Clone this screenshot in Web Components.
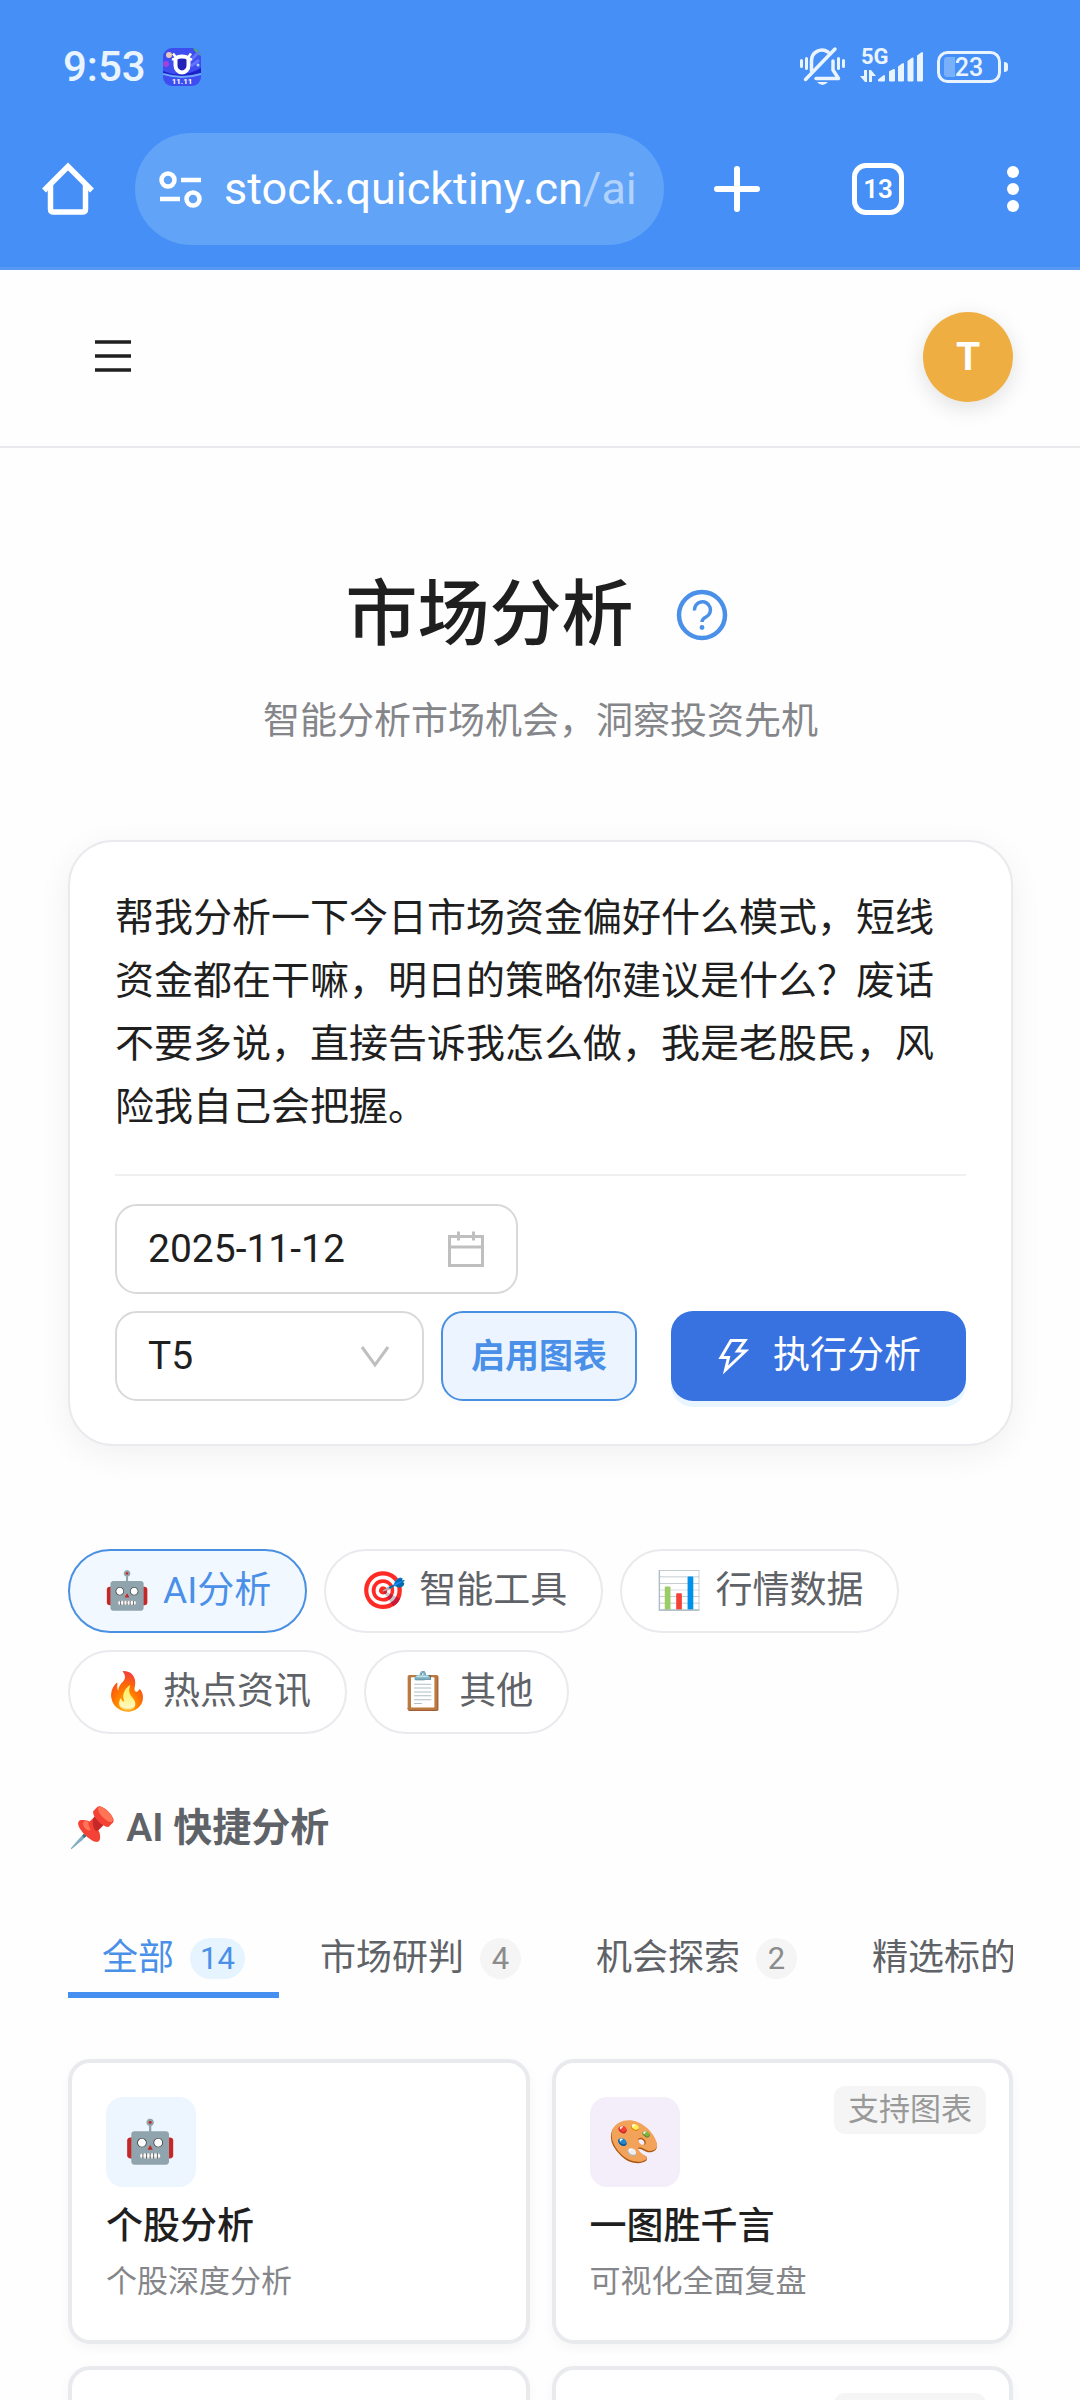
<!DOCTYPE html>
<html lang="zh-CN">
<head>
    <meta charset="UTF-8">
    <meta name="viewport" content="width=device-width, initial-scale=1.0">
    <title>市场分析</title>
    <style>
        body {
            margin: 0;
            background: #fefefe;
            color: #1f1f1f;
            font-family: Roboto, "Noto Sans CJK SC", "Noto Color Emoji", sans-serif;
            font-size: 37px;
            line-height: 58px;
        }
    </style>
</head>
<body>
    <market-page></market-page>

    <script>
        const resetStyles = `
            * { box-sizing: border-box; }
            button, input, select, textarea {
                margin: 0;
                padding: 0;
                border: 0;
                background: none;
                color: inherit;
                font: inherit;
                outline: none;
            }
            h1, h2, h3, p { margin: 0; }
            svg { display: block; flex: none; overflow: visible; }
        `;

        function render(el, css, html) {
            const root = el.attachShadow({ mode: 'open' });
            root.innerHTML = `<style>${resetStyles}${css}</style>${html}`;
        }

        class StatusBar extends HTMLElement {
            constructor() {
                super();
                render(this, `
                    :host {
                        display: flex;
                        align-items: center;
                        justify-content: space-between;
                        height: 133px;
                        padding: 0 71px 0 63px;
                        background: #458ff7;
                        color: #eaf4ff;
                    }
                    .side { display: flex; align-items: center; gap: 14px; }
                    .left { gap: 17px; }
                    .time { font-size: 42px; font-weight: 500; }
                    text { font-family: Roboto, sans-serif; font-weight: 700; }
                `, `
                    <div class="side left">
                        <span class="time">9:53</span>
                        <svg width="38" height="38" viewBox="0 0 38 38">
                            <defs><clipPath id="app"><rect width="38" height="38" rx="9"/></clipPath></defs>
                            <g clip-path="url(#app)">
                                <rect width="38" height="38" fill="#3d4df0"/>
                                <path d="M0 23Q19 31 38 20V25Q19 33 0 27z" fill="#1d22c6"/>
                                <path d="M0 26Q19 32 38 26" fill="none" stroke="#6fa8ff" stroke-width="2"/>
                                <path d="M30 0h8v8q-5-2-8-8z" fill="#4caf6e"/>
                                <path d="M26 14l10-10M28 18l8-6" stroke="#6173ff" stroke-width="3"/>
                                <circle cx="6" cy="7" r="3" fill="#e8c9b4"/>
                                <circle cx="3" cy="16" r="3" fill="#a341dc"/>
                                <circle cx="35" cy="17" r="1.5" fill="#a9d7ff"/>
                                <path d="M12.500 10.500V17.500a6.500 7 0 0 0 13 0V10.500q-2-2-6.500-2t-6.500 2z" fill="#2222b8" stroke="#fff" stroke-width="4" stroke-linejoin="round"/>
                                <path d="M9 11q3 1 4-1M29 11q-3 1-4-1M10 5.500l3 4M28 5.500l-3 4" fill="none" stroke="#fff" stroke-width="2.5"/>
                                <text x="19" y="36" text-anchor="middle" font-size="8" fill="#fff">11.11</text>
                            </g>
                        </svg>
                    </div>
                    <div class="side">
                        <svg width="45" height="40" viewBox="0 0 45 40" fill="none" stroke="currentColor" stroke-width="3.5" stroke-linecap="round">
                            <path d="M11.500 24V14a10.500 10.500 0 0 1 16.500-9M33 14v9l5.500 8.500H16" stroke-linejoin="round"/>
                            <path d="M5.500 32.500L35 2"/>
                            <path d="M1.500 13.500v6M6.500 11.500v10M38.500 11.500v10M43.500 13.500v6" stroke-width="3"/>
                            <path d="M17 35h11q-5.500 6-11 0z" fill="currentColor" stroke="none"/>
                        </svg>
                        <svg width="64" height="40" viewBox="0 0 64 40" fill="currentColor">
                            <text x="2" y="17" font-size="22">5G</text>
                            <path d="M5 23h3v12h-2l-5-6h4zM10 35V23h2l5 6h-4v6z"/>
                            <path d="M20 33l5-4v4.500h-5zM31 25l4-2v10.500h-4zM40 20l4-3v16.500h-4zM49.500 14.500l4-3v22h-4zM59 9l4-3v27.500h-4z" stroke="currentColor" stroke-width="2" stroke-linejoin="round"/>
                        </svg>
                        <svg width="72" height="32" viewBox="0 0 72 32">
                            <rect x="1.500" y="1.500" width="61" height="29" rx="9" fill="none" stroke="currentColor" stroke-width="3"/>
                            <path d="M10 6h8v20h-8q-3 0-3-3V9q0-3 3-3z" fill="#79b0fb"/>
                            <path d="M67 11q4 0 4 3v4q0 3-4 3z" fill="currentColor"/>
                            <text x="32" y="25" font-size="25" text-anchor="middle" fill="currentColor" style="font-weight:500">23</text>
                        </svg>
                    </div>
                `);
            }
        }
        customElements.define('status-bar', StatusBar);

        class BrowserBar extends HTMLElement {
            constructor() {
                super();
                render(this, `
                    :host {
                        display: grid;
                        grid-template-columns: 135px minmax(0, 1fr) 146px 136px 134px;
                        height: 137px;
                        padding-bottom: 22px;
                        border-bottom: 3px solid #5799f2;
                        background: #458ff7;
                        color: #fff;
                    }
                    button { display: grid; place-items: center; }
                    .address {
                        display: flex;
                        align-items: center;
                        gap: 22px;
                        padding: 0 24px;
                        border-radius: 56px;
                        background: #60a3f7;
                        font-size: 45px;
                        white-space: nowrap;
                    }
                    .path { color: #b0d2fc; }
                    .count {
                        display: grid;
                        place-items: center;
                        width: 52px;
                        height: 52px;
                        border: 5px solid #fff;
                        border-radius: 14px;
                        font-size: 26px;
                        font-weight: 600;
                        line-height: 42px;
                    }
                `, `
                    <button aria-label="主页">
                        <svg width="52" height="52" viewBox="0 0 52 52" fill="none" stroke="currentColor" stroke-width="5.500" stroke-linejoin="round">
                            <path d="M2 27.500L26 3.500L50 27.500" stroke-linejoin="miter"/>
                            <path d="M8.500 22v24q0 3 3 3h29q3 0 3-3V22"/>
                        </svg>
                    </button>
                    <div class="address">
                        <svg width="43" height="38" viewBox="0 0 43 38" fill="none" stroke="currentColor" stroke-width="4.500">
                            <circle cx="9" cy="10" r="6.500"/>
                            <circle cx="34" cy="29" r="6.500"/>
                            <path d="M22 10h20M1 29h20"/>
                        </svg>
                        <span>stock.quicktiny.cn<span class="path">/ai</span></span>
                    </div>
                    <button aria-label="新标签页">
                        <svg width="46" height="46" viewBox="0 0 46 46" stroke="currentColor" stroke-width="6" stroke-linecap="round">
                            <path d="M23 3v40M3 23h40"/>
                        </svg>
                    </button>
                    <button><span class="count">13</span></button>
                    <button aria-label="更多">
                        <svg width="12" height="46" viewBox="0 0 12 46" fill="currentColor">
                            <circle cx="6" cy="6" r="6"/><circle cx="6" cy="23" r="6"/><circle cx="6" cy="40" r="6"/>
                        </svg>
                    </button>
                `);
            }
        }
        customElements.define('browser-bar', BrowserBar);

        class SiteHeader extends HTMLElement {
            constructor() {
                super();
                render(this, `
                    :host {
                        display: flex;
                        align-items: center;
                        justify-content: space-between;
                        height: 178px;
                        padding: 0 67px 3px 95px;
                        border-bottom: 2px solid #e8eaed;
                    }
                    .avatar {
                        width: 90px;
                        height: 90px;
                        border-radius: 50%;
                        background: #efae42;
                        box-shadow: 0 6px 22px rgba(0, 0, 0, .12);
                        color: #fff;
                        font-size: 39px;
                        font-weight: 700;
                    }
                `, `
                    <button aria-label="菜单">
                        <svg width="36" height="36" viewBox="0 0 36 36" stroke="currentColor" stroke-width="3.500">
                            <path d="M0 3h36M0 17h36M0 31h36"/>
                        </svg>
                    </button>
                    <button class="avatar">T</button>
                `);
            }
        }
        customElements.define('site-header', SiteHeader);

        class PageTitle extends HTMLElement {
            constructor() {
                super();
                render(this, `
                    :host { display: block; text-align: center; }
                    .title {
                        display: flex;
                        align-items: center;
                        justify-content: center;
                        gap: 42px;
                        margin-bottom: 28px;
                        padding-right: 8px;
                    }
                    h1 { font-size: 72px; font-weight: 500; line-height: 100px; }
                    button { color: #4a90e8; }
                    p { color: #85868a; }
                `, `
                    <div class="title">
                        <h1><slot></slot></h1>
                        <button aria-label="帮助">
                            <svg width="52" height="52" viewBox="0 0 52 52" fill="none" stroke="currentColor" stroke-width="4.500">
                                <circle cx="26" cy="26" r="23"/>
                                <path d="M18.500 21.500a8 8 0 1 1 11.500 6.500q-4 2-4 5" stroke-width="3.500"/>
                                <circle cx="26" cy="38.500" r="2.400" fill="currentColor" stroke="none"/>
                            </svg>
                        </button>
                    </div>
                    <p><slot name="subtitle"></slot></p>
                `);
            }
        }
        customElements.define('page-title', PageTitle);

        class PromptForm extends HTMLElement {
            constructor() {
                super();
                render(this, `
                    :host {
                        display: block;
                        padding: 45px 45px 43px;
                        border: 2px solid #e8eaed;
                        border-radius: 45px;
                        background: #fff;
                        box-shadow: 0 8px 34px rgba(0, 0, 0, .06);
                    }
                    textarea {
                        display: block;
                        width: 100%;
                        height: 252px;
                        overflow: hidden;
                        resize: none;
                        font-size: 39px;
                        line-height: 63px;
                    }
                    .controls {
                        display: grid;
                        gap: 17px;
                        margin-top: 35px;
                        padding-top: 28px;
                        border-top: 2px solid #f0f0f0;
                    }
                    .row { display: flex; gap: 17px; }
                    .field {
                        display: grid;
                        grid-template-columns: minmax(0, 1fr) 40px;
                        align-items: center;
                        height: 90px;
                        padding: 0 30px 0 31px;
                        border: 2px solid #d9d9d9;
                        border-radius: 22px;
                        font-size: 39px;
                    }
                    .field svg { grid-area: 1 / 2; justify-self: end; color: #bfbfbf; pointer-events: none; }
                    .date { width: 403px; }
                    .model { width: 309px; }
                    select { grid-area: 1 / 1 / 2 / 3; appearance: none; width: 100%; }
                    .chart {
                        height: 90px;
                        padding: 0 28px;
                        border: 2px solid #4a90e2;
                        border-radius: 22px;
                        background: #ecf5ff;
                        box-shadow: 0 6px 0 rgba(0, 0, 0, .01);
                        color: #4a90e8;
                        font-size: 34px;
                        font-weight: 600;
                    }
                    .run {
                        display: flex;
                        align-items: center;
                        justify-content: center;
                        gap: 23px;
                        width: 295px;
                        height: 90px;
                        margin-left: auto;
                        border-radius: 22px;
                        background: #3871e0;
                        box-shadow: 0 6px 0 #e9f5ff;
                        color: #fff;
                    }
                `, `
                    <textarea aria-label="分析问题" spellcheck="false">帮我分析一下今日市场资金偏好什么模式，短线资金都在干嘛，明日的策略你建议是什么？废话不要多说，直接告诉我怎么做，我是老股民，风险我自己会把握。</textarea>
                    <div class="controls">
                        <div class="row">
                            <label class="field date">
                                <input type="text" value="2025-11-12" aria-label="日期">
                                <svg width="40" height="40" viewBox="0 0 40 40" fill="none" stroke="currentColor" stroke-width="3">
                                    <path d="M3.500 7.500h33v29h-33zM3.500 18h33M12.500 2.500v9M27.500 2.500v9"/>
                                </svg>
                            </label>
                        </div>
                        <div class="row">
                            <label class="field model">
                                <select aria-label="模型"><option>T5</option></select>
                                <svg width="34" height="34" viewBox="0 0 34 34" fill="none" stroke="currentColor" stroke-width="3">
                                    <path d="M4 8L17 26L30 8"/>
                                </svg>
                            </label>
                            <button class="chart">启用图表</button>
                            <button class="run">
                                <svg width="34" height="37" viewBox="0 0 34 37" fill="none" stroke="currentColor" stroke-width="3">
                                    <path d="M15 2.500H29L21.500 13H29.500L9.500 32L12.500 19.500H5z"/>
                                </svg>
                                执行分析
                            </button>
                        </div>
                    </div>
                `);
            }
        }
        customElements.define('prompt-form', PromptForm);

        class CategoryChip extends HTMLElement {
            constructor() {
                super();
                render(this, `
                    :host { display: block; color: #5f6368; }
                    :host([active]) { color: #4a90e8; }
                    button {
                        display: flex;
                        align-items: center;
                        gap: 13px;
                        height: 84px;
                        padding: 0 34px;
                        border: 2px solid #e8eaed;
                        border-radius: 42px;
                        background: #fff;
                    }
                    :host([active]) button { border-color: #4a90e2; background: #f2f8ff; }
                `, `
                    <button><slot name="icon"></slot><span><slot></slot></span></button>
                `);
            }
        }
        customElements.define('category-chip', CategoryChip);

        class FilterTab extends HTMLElement {
            constructor() {
                super();
                const count = this.getAttribute('count');
                render(this, `
                    :host { display: block; flex: none; color: #5f6368; font-size: 36px; }
                    :host([active]) { color: #4a90e8; }
                    button {
                        display: flex;
                        align-items: center;
                        gap: 16px;
                        height: 74px;
                        padding: 0 34px;
                        border-bottom: 6px solid transparent;
                        white-space: nowrap;
                    }
                    :host([active]) button { border-color: #458ff0; }
                    .count {
                        min-width: 41px;
                        padding: 0 10px;
                        border-radius: 21px;
                        background: #f5f5f5;
                        color: #8c8c8c;
                        font-size: 31px;
                        line-height: 41px;
                    }
                    :host([active]) .count { background: #e6f4ff; color: #4a90e8; }
                `, `
                    <button role="tab"><slot></slot>${count ? `<span class="count">${count}</span>` : ''}</button>
                `);
            }
        }
        customElements.define('filter-tab', FilterTab);

        class QuickCard extends HTMLElement {
            constructor() {
                super();
                render(this, `
                    :host {
                        display: block;
                        position: relative;
                        padding: 34px;
                        border: 4px solid #e8eaed;
                        border-radius: 22px;
                        background: #fff;
                        box-shadow: 0 4px 12px rgba(0, 0, 0, .04);
                    }
                    .icon {
                        display: grid;
                        place-items: center;
                        width: 90px;
                        height: 90px;
                        margin-bottom: 14px;
                        border-radius: 17px;
                        background: var(--tint, #edf6ff);
                        font-size: 42px;
                    }
                    h3 { min-height: 51px; margin-bottom: 6px; font-size: 37px; font-weight: 500; line-height: 51px; }
                    p { min-height: 48px; color: #85868a; font-size: 31px; line-height: 48px; }
                    .badge {
                        position: absolute;
                        top: 23px;
                        right: 23px;
                        padding: 0 14px;
                        border-radius: 11px;
                        background: #f5f5f5;
                        color: #999;
                        font-size: 31px;
                        line-height: 48px;
                    }
                `, `
                    <div class="icon"><slot name="icon"></slot></div>
                    <h3><slot></slot></h3>
                    <p><slot name="desc"></slot></p>
                    ${this.hasAttribute('chart') ? '<span class="badge">支持图表</span>' : ''}
                `);
            }
        }
        customElements.define('quick-card', QuickCard);

        class MarketPage extends HTMLElement {
            constructor() {
                super();
                render(this, `
                    :host { display: flex; flex-direction: column; height: 100vh; overflow: hidden; }
                    status-bar, browser-bar, site-header { flex: none; }
                    main { flex: 1; min-height: 0; overflow: hidden; padding: 117px 67px 0 68px; }
                    prompt-form { margin-top: 89px; }
                    .chips { display: flex; flex-wrap: wrap; gap: 17px; margin-top: 103px; }
                    h2 { margin-top: 65px; color: #5f6368; font-size: 39px; font-weight: 600; line-height: 58px; }
                    .tabs { display: flex; gap: 7px; margin-top: 67px; overflow: hidden; }
                    .cards { display: grid; grid-template-columns: 1fr 1fr; gap: 22px; margin-top: 61px; }
                `, `
                    <status-bar></status-bar>
                    <browser-bar></browser-bar>
                    <site-header></site-header>
                    <main>
                        <page-title>市场分析<span slot="subtitle">智能分析市场机会，洞察投资先机</span></page-title>
                        <prompt-form></prompt-form>
                        <nav class="chips">
                            <category-chip active><span slot="icon">🤖</span>AI分析</category-chip>
                            <category-chip><span slot="icon">🎯</span>智能工具</category-chip>
                            <category-chip><span slot="icon">📊</span>行情数据</category-chip>
                            <category-chip><span slot="icon">🔥</span>热点资讯</category-chip>
                            <category-chip><span slot="icon">📋</span>其他</category-chip>
                        </nav>
                        <h2>📌 AI 快捷分析</h2>
                        <div class="tabs" role="tablist">
                            <filter-tab active count="14">全部</filter-tab>
                            <filter-tab count="4">市场研判</filter-tab>
                            <filter-tab count="2">机会探索</filter-tab>
                            <filter-tab>精选标的</filter-tab>
                        </div>
                        <div class="cards">
                            <quick-card><span slot="icon">🤖</span>个股分析<span slot="desc">个股深度分析</span></quick-card>
                            <quick-card chart style="--tint: #f3eefa"><span slot="icon">🎨</span>一图胜千言<span slot="desc">可视化全面复盘</span></quick-card>
                            <quick-card></quick-card>
                            <quick-card chart></quick-card>
                        </div>
                    </main>
                `);
            }
        }
        customElements.define('market-page', MarketPage);
    </script>
</body>
</html>
